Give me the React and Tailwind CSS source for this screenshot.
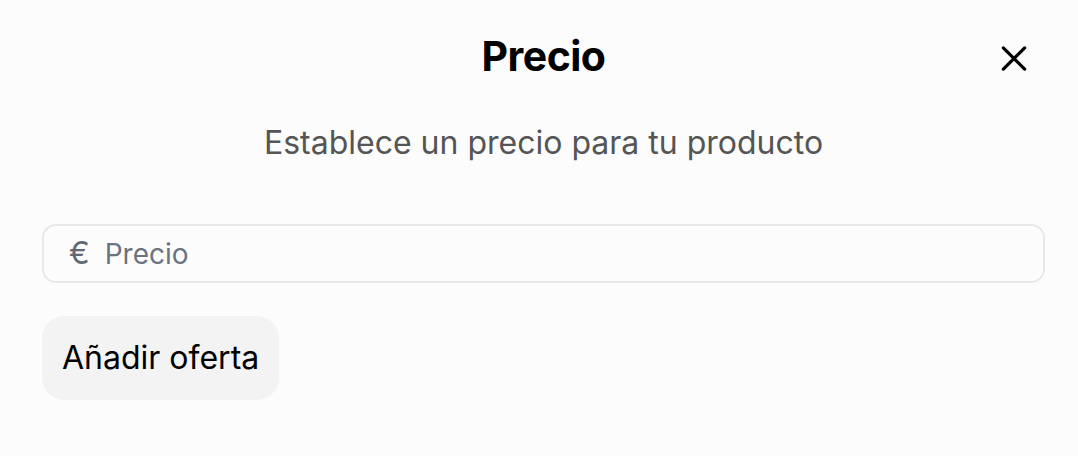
export default function App() {
  return (
    <div className="w-[1078px] h-[456px] bg-[#fcfcfc] font-['Inter',sans-serif] pl-[42px] pr-[33px] overflow-hidden">
      {/* Cabecera */}
      <div className="relative flex items-center justify-center h-[114px]">
        <h1 className="text-[41px] font-bold text-black tracking-[-0.5px]">Precio</h1>
        <button className="absolute right-[15px] top-[42px] w-[32px] h-[32px] flex items-center justify-center">
          <svg width="33" height="33" viewBox="0 0 24 24" fill="none" stroke="black" strokeWidth="2.4" strokeLinecap="round">
            <path d="M4 4l16 16M20 4L4 20" />
          </svg>
        </button>
      </div>
      <p className="text-center text-[32px] text-[#555555] leading-[42px] mt-[8px]">
        Establece un precio para tu producto
      </p>

      {/* Campo de precio */}
      <div className="mt-[60px] h-[59px] border-2 border-[#e8e8ea] rounded-[14px] flex items-center pl-[25px] gap-[15px]">
        <span className="text-[31px] text-[#5f6773]">€</span>
        <span className="text-[28px] text-[#6b7280]">Precio</span>
      </div>

      <button className="mt-[33px] h-[84px] px-[20px] bg-[#f3f3f3] rounded-[22px] text-[32px] text-black">
        Añadir oferta
      </button>
    </div>
  );
}
